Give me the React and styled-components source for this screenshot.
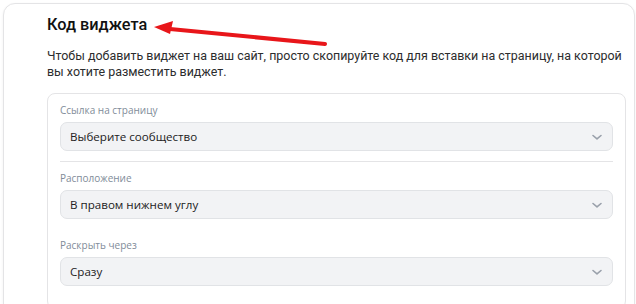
import React from 'react';
import styled, { createGlobalStyle } from 'styled-components';

const GlobalStyle = createGlobalStyle`
  html, body {
    margin: 0;
    padding: 0;
    background: #ffffff;
    overflow: hidden;
  }
  body {
    font-family: Roboto, "Liberation Sans", sans-serif;
  }
`;

const Chevron = () => (
  <svg width="12" height="8" viewBox="0 0 12 8" fill="none">
    <path d="M2 2.5 L6 5.8 L10 2.5" stroke="#99a0aa" strokeWidth="1.6" strokeLinecap="round" strokeLinejoin="round" />
  </svg>
);

const Arrow = () => (
  <svg width="190" height="34" viewBox="0 0 190 34">
    <line x1="18" y1="15" x2="173" y2="30" stroke="#e8161a" strokeWidth="4" strokeLinecap="round" />
    <polygon points="2,13 21,7 18,20" fill="#e8161a" />
  </svg>
);

const fields = [
  { label: 'Ссылка на страницу', value: 'Выберите сообщество' },
  { label: 'Расположение', value: 'В правом нижнем углу' },
  { label: 'Раскрыть через', value: 'Сразу' },
];

const App = () => {
  return (
    <>
      <GlobalStyle />
      <Styled.Card>
        <Styled.Header>
          <Styled.Title>Код виджета</Styled.Title>
          <Styled.ArrowWrap>
            <Arrow />
          </Styled.ArrowWrap>
        </Styled.Header>
        <Styled.Desc>
          Чтобы добавить виджет на ваш сайт, просто скопируйте код для вставки на страницу, на которой
          вы хотите разместить виджет.
        </Styled.Desc>
        <Styled.Panel>
          {fields.map((f, i) => (
            <Styled.Field key={f.label} divided={i === 0}>
              <Styled.Label>{f.label}</Styled.Label>
              <Styled.Select>
                <span>{f.value}</span>
                <Chevron />
              </Styled.Select>
            </Styled.Field>
          ))}
        </Styled.Panel>
      </Styled.Card>
    </>
  );
};

const Styled = {
  Card: styled.div`
    margin: 3px 1px 0 3px;
    height: 320px;
    box-sizing: border-box;
    border: 1px solid #e4e4e6;
    border-radius: 12px;
    box-shadow: 0 1px 3px rgba(0, 0, 0, 0.06);
    padding: 10px 8px 0 43px;
    background: #fff;
  `,
  Header: styled.div`
    position: relative;
    height: 22px;
  `,
  Title: styled.h2`
    margin: 0;
    font-size: 16.3px;
    font-weight: 500;
    line-height: 22px;
    color: #111;
  `,
  ArrowWrap: styled.div`
    position: absolute;
    left: 105px;
    top: 0px;
    line-height: 0;
  `,
  Desc: styled.p`
    margin: 12px 0 0;
    font-size: 12.45px;
    line-height: 16px;
    color: #2c2d2e;
  `,
  Panel: styled.div`
    margin-top: 13px;
    border: 1px solid #e4e4e6;
    border-radius: 8px;
    padding: 0 12px 12px 12px;
    font-family: "Open Sans", "Noto Sans", sans-serif;
  `,
  Field: styled.div`
    padding: 9px 0 10px;
    border-bottom: ${(p) => (p.divided ? '1px solid #e4e4e6' : 'none')};
  `,
  Label: styled.div`
    font-size: 10px;
    line-height: 15px;
    color: #818c99;
    margin-bottom: 4px;
  `,
  Select: styled.div`
    display: flex;
    align-items: center;
    justify-content: space-between;
    height: 29px;
    box-sizing: border-box;
    padding: 0 9px 0 9px;
    background: #f2f3f5;
    border: 1px solid #e1e3e6;
    border-radius: 7px;
    font-size: 11.6px;
    color: #222;
  `,
};

export default App;
